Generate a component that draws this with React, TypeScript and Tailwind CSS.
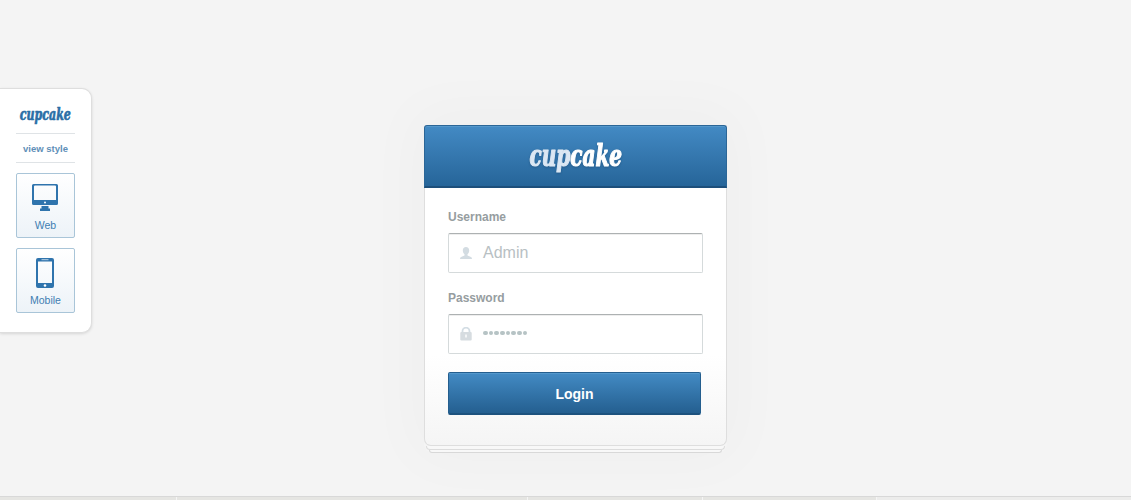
import React from 'react';

interface LogoProps {
  className: string;
  light?: boolean;
}

const Logo: React.FC<LogoProps> = ({ className, light }) => (
  <svg viewBox="0 0 96 36" className={className} role="img" aria-label="cupcake">
    <defs>
      <linearGradient id="logo-light" gradientUnits="userSpaceOnUse" x1="0" y1="0" x2="96" y2="0">
        <stop offset="0.43" stopColor="#dbe7f3" />
        <stop offset="0.44" stopColor="#ffffff" />
      </linearGradient>
    </defs>
    <text
      x="1.500"
      y="26"
      textLength="92.500"
      lengthAdjust="spacingAndGlyphs"
      fontFamily="'DejaVu Serif Condensed', 'DejaVu Serif', serif"
      fontSize="29"
      fontWeight="700"
      fontStyle="italic"
      fontStretch="condensed"
      fill={light ? 'url(#logo-light)' : '#2a6ea6'}
      stroke={light ? 'url(#logo-light)' : '#2a6ea6'}
      strokeWidth="1.200"
      strokeLinejoin="round"
    >
      cupcake
    </text>
  </svg>
);

const WebIcon = () => (
  <svg width="28" height="30" viewBox="0 0 28 30" fill="#2f74ad">
    <path fillRule="evenodd" d="M2.500 1h23A1.500 1.500 0 0 1 27 2.500v18A1.500 1.500 0 0 1 25.500 22h-23A1.500 1.500 0 0 1 1 20.500v-18A1.500 1.500 0 0 1 2.500 1zM4 2.500a1 1 0 0 0-1 1V17h22V3.500a1 1 0 0 0-1-1z" />
    <path d="M10.500 23h7v2.500h1.500V28H9v-2.500h1.500z" />
    <circle cx="14" cy="19.500" r="1" fill="#fff" />
  </svg>
);

const MobileIcon = () => (
  <svg width="20" height="32" viewBox="0 0 20 32" fill="#2f74ad">
    <path fillRule="evenodd" d="M3 1h14a2 2 0 0 1 2 2v26a2 2 0 0 1-2 2H3a2 2 0 0 1-2-2V3a2 2 0 0 1 2-2zM3 4.500v21.500h14V4.500z" />
    <path d="M6.500 2.700h7" stroke="#dfeaf3" strokeWidth="0.8" />
    <circle cx="10" cy="28.500" r="1.300" fill="#fff" />
  </svg>
);

const UserIcon = () => (
  <svg width="12" height="13" viewBox="0 0 12 13" fill="#d3dce2">
    <path d="M6 0c2 0 3.200 1.400 3.200 3.400 0 1.500-.7 3-1.700 3.800v1.300l3.500 1.600c.7.400 1 1 1 1.900H0c0-.9.300-1.500 1-1.900l3.500-1.600V7.200C3.500 6.400 2.800 4.900 2.800 3.400 2.800 1.400 4 0 6 0z" />
  </svg>
);

const LockIcon = () => (
  <svg width="12" height="14" viewBox="0 0 12 14">
    <path d="M2.500 6V4.200a3.500 3.500 0 0 1 7 0V6" fill="none" stroke="#d3dde4" strokeWidth="1.800" />
    <rect x="0.300" y="5" width="11.400" height="8.500" rx="1" fill="#d6dce0" />
    <path d="M6 7.500v3" stroke="#fff" strokeWidth="1.400" />
  </svg>
);

interface FieldProps {
  label: string;
  value: string;
  type: string;
  icon: React.ReactNode;
}

const Field: React.FC<FieldProps> = ({ label, value, type, icon }) => (
  <label className="block h-[81px] w-[255px]">
    <span className="block h-[25px] text-[12px] leading-[18px] font-bold text-[#969da0]">{label}</span>
    <span className="flex h-10 items-center rounded-[2px] border border-[#d5dadb] border-t-[#adb1b2] bg-white pl-[11px] shadow-[inset_0_1px_0_#eeeeee]">
      <span className="flex w-[23px]">{icon}</span>
      {type === 'password' ? (
        <span className="flex gap-[1.200px]" aria-label="password">
          {value.split('').map((_, i) => (
            <i key={i} className="-mt-[2px] h-[4.500px] w-[4.500px] rounded-full bg-[#b6c3c5]" />
          ))}
        </span>
      ) : (
        <span className="text-[16px] leading-none text-[#b8c0c3]">{value}</span>
      )}
    </span>
  </label>
);

const StyleButton = ({ label, icon }: { label: string; icon: React.ReactNode }) => (
  <button className="flex h-[65px] w-[59px] flex-col items-center justify-between rounded-[2px] border border-[#a9c5d8] bg-linear-to-b from-white to-[#edf3f8] pb-[6px] text-[10.500px] leading-[12px] text-[#3e7eb2]">
    <span className="flex h-[44px] items-center pt-[3px] pr-px">{icon}</span>
    {label}
  </button>
);

export default function App() {
  return (
    <div className="flex h-[500px] w-[1131px] flex-col overflow-hidden bg-[#f4f4f4] font-['Liberation_Sans',sans-serif]">
      <div className="flex h-[496px] items-start">
        <aside className="mt-[88px] flex h-[245px] w-[92px] flex-col items-start rounded-r-[10px] border border-l-0 border-[#dedede] bg-white pl-4 shadow-[0_1px_3px_rgba(0,0,0,0.12)]">
          <Logo className="mt-[17px] ml-[3px] h-[20px] w-[53px] shrink-0 overflow-visible" />
          <div className="mt-[7px] h-[30px] w-[59px] shrink-0 border-y border-[#dfe3e6] text-center text-[9.500px] leading-[29px] font-bold text-[#5f8fb8]">
            view style
          </div>
          <div className="mt-[10px] flex flex-col gap-[10px]">
            <StyleButton label="Web" icon={<WebIcon />} />
            <StyleButton label="Mobile" icon={<MobileIcon />} />
          </div>
        </aside>

        <main className="mt-[125px] ml-[332px] w-[303px] rounded-b-[9px] shadow-[0_-4px_60px_12px_rgba(0,0,0,0.025)]">
          <header className="flex h-[63px] justify-center rounded-t-[3px] border border-b-2 border-[#2b6697] border-b-[#1d4f7b] bg-linear-to-b from-[#438ac4] to-[#266599] pt-[14px] shadow-[inset_0_1px_0_#5598cb]">
            <Logo light className="h-[36px] w-[96px] overflow-visible drop-shadow-[0_1px_1px_rgba(20,60,100,0.4)]" />
          </header>
          <form className="h-[258px] rounded-b-[7px] border border-t-0 border-[#dedede] bg-linear-to-b from-white from-65% to-[#f5f5f5] pt-[20px] pl-[23px]">
            <Field label="Username" type="text" value="Admin" icon={<UserIcon />} />
            <Field label="Password" type="password" value="cupcakes" icon={<LockIcon />} />
            <button
              type="button"
              className="mt-[2px] h-[43px] w-[253px] rounded-[2px] border border-b-2 border-[#245e8e] border-b-[#1d527e] bg-linear-to-b from-[#438bc4] to-[#245f90] pt-[2px] text-[14px] font-bold text-white shadow-[inset_0_1px_0_#5498cc]"
            >
              Login
            </button>
          </form>
          <div className="mx-[2px] h-[4px] rounded-b-[6px] border border-t-0 border-[#dcdcdc] bg-[#f8f8f8]" />
          <div className="mx-[5px] h-[3px] rounded-b-[6px] border border-t-0 border-[#d8d8d8] bg-[#f8f8f8]" />
        </main>
      </div>

      <footer className="flex h-[4px] gap-px border-t border-[#d8d8d8] bg-[#f5f5f5]">
        <div className="w-[176px] bg-[#e5e5e2]" />
        <div className="w-[350px] bg-[#e5e5e2]" />
        <div className="w-[174px] bg-[#e5e5e2]" />
        <div className="w-[173px] bg-[#e5e5e2]" />
        <div className="flex-1 bg-[#ececeb]" />
      </footer>
    </div>
  );
}
